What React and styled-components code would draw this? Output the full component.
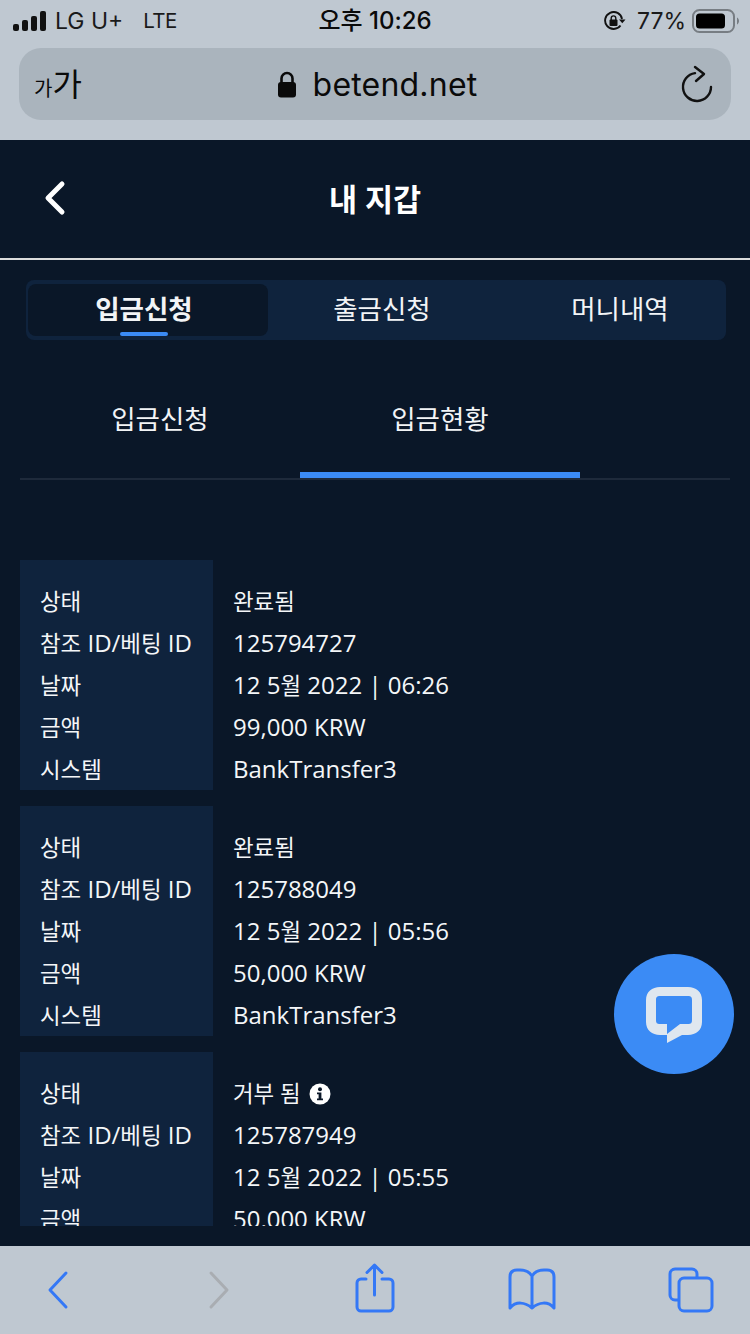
import React from "react";
import styled, { createGlobalStyle } from "styled-components";

const KO = `"Open Sans", "Noto Sans CJK KR", sans-serif`;
const SYS = `Inter, "Noto Sans CJK KR", sans-serif`;

const GlobalStyle = createGlobalStyle`
  html, body { margin: 0; padding: 0; background: #0a1728; }
  * { box-sizing: border-box; }
`;

// ===== browser chrome =====
const Page = styled.div`
  position: relative;
  width: 750px;
  height: 1334px;
  display: flex;
  flex-direction: column;
  overflow: hidden;
  background: #0a1728;
  font-family: ${KO};
  color: #fff;
`;
const TopChrome = styled.div`
  height: 140px;
  flex: none;
  background: #bfc8d1;
  color: #0a0a0a;
  font-family: ${SYS};
  padding: 0 19px;
`;
const StatusBar = styled.div`
  height: 48px;
  display: grid;
  grid-template-columns: 1fr auto 1fr;
  align-items: center;
  padding: 0 0 6px 0;
  font-size: 23px;
  line-height: 30px;
`;
const StatusLeft = styled.div`
  display: flex;
  align-items: center;
  margin-left: -6px;
  gap: 8px;
  color: #1a1a1a;
`;
const StatusTime = styled.div`
  font-size: 24px;
  font-weight: 500;
`;
const StatusRight = styled.div`
  display: flex;
  align-items: center;
  justify-content: flex-end;
  gap: 6px;
  color: #1a1a1a;
  margin-right: -8px;
`;
const Carrier = styled.span`
  font-size: 23px;
`;
const Network = styled.span`
  margin-left: 12px;
  font-size: 20.5px;
  letter-spacing: -0.6px;
`;
const Percent = styled.span`
  margin-left: 5px;
`;
const UrlBar = styled.div`
  height: 72px;
  width: 712px;
  border-radius: 22px;
  background: #aab4bd;
  display: grid;
  grid-template-columns: 1fr auto 1fr;
  align-items: center;
  padding: 0 17px 0 15px;
`;
const FontSizer = styled.div`
  display: flex;
  align-items: baseline;
  font-family: "Noto Sans CJK KR", sans-serif;
  font-size: 32px;
  line-height: 38px;
  padding-top: 2px;
`;
const SmallKa = styled.span`
  font-size: 20px;
`;
const UrlText = styled.div`
  display: flex;
  align-items: center;
  gap: 16px;
  font-size: 32px;
  line-height: 40px;
  letter-spacing: 0.2px;
  margin-left: 6px;
  padding-top: 1px;
`;
const Reload = styled.div`
  display: flex;
  justify-content: flex-end;
`;

// ===== wallet header =====
const Header = styled.header`
  height: 120px;
  flex: none;
  display: flex;
  align-items: center;
  justify-content: center;
  position: relative;
  border-bottom: 2px solid #dcdcdc;
  font-size: 30.5px;
  font-weight: 700;
  padding-bottom: 2px;
`;
const BackButton = styled.div`
  position: absolute;
  left: 40px;
  top: 38px;
  display: flex;
`;

const MainTabs = styled.nav`
  width: 700px;
  height: 60px;
  margin: 20px 0 0 26px;
  flex: none;
  display: grid;
  grid-template-columns: 240px 228px 1fr;
  padding: 4px 2px;
  border-radius: 8px;
  background: #0f233d;
`;
const MainTab = styled.div`
  position: relative;
  display: flex;
  align-items: center;
  justify-content: center;
  font-size: 26.5px;
  line-height: 36px;
  padding: 0 ${(props) => props.$padRight || 0}px 2px ${(props) => props.$padLeft || 0}px;
  font-weight: ${(props) => (props.$active ? 700 : 400)};
  background: ${(props) => (props.$active ? "#0a1728" : "transparent")};
  border-radius: 8px;
  color: #f2f4f6;
`;
const TabMark = styled.span`
  position: absolute;
  left: 92px;
  bottom: 0;
  width: 48px;
  height: 4px;
  border-radius: 2px;
  background: #3b8bf5;
`;

const SubTabs = styled.div`
  margin: 40px 20px 0;
  height: 100px;
  flex: none;
  display: flex;
  border-bottom: 2px solid #1e2a3b;
`;
const SubTab = styled.div`
  width: 280px;
  display: flex;
  align-items: flex-start;
  justify-content: center;
  padding-top: 19px;
  font-size: 26.5px;
  line-height: 40px;
  color: #f2f4f6;
  border-bottom: ${(props) => (props.$active ? "6px solid #3b8bf5" : "0")};
  height: ${(props) => (props.$active ? "98px" : "auto")};
`;

// ===== history list =====
const HistoryList = styled.div`
  margin: 80px 20px 0;
  height: 666px;
  flex: none;
  overflow: hidden;
  display: flex;
  flex-direction: column;
  gap: 16px;
`;
const Record = styled.div`
  flex: none;
  height: 230px;
  display: grid;
  grid-template-columns: 193px 1fr;
`;
const Labels = styled.div`
  background: #0f233d;
  padding: 20px 0 0 20px;
`;
const Values = styled.div`
  padding: 20px 0 0 20px;
`;
const Line = styled.div`
  height: 42px;
  font-size: 24px;
  line-height: 42px;
  white-space: nowrap;
  color: #f4f6f8;
`;
const Hangul = styled.span`
  font-size: 22.4px;
`;
const InfoMark = styled.svg`
  width: 22px;
  height: 22px;
  margin-left: 8px;
  vertical-align: -3px;
`;

// ===== floating chat =====
const ChatBubble = styled.div`
  position: absolute;
  left: 614px;
  top: 954px;
  width: 120px;
  height: 120px;
  border-radius: 50%;
  background: #3b8bf5;
  display: flex;
  align-items: center;
  justify-content: center;
  padding-top: 2px;
`;

// ===== safari toolbar =====
const Spacer = styled.div`
  flex: 1;
`;
const BottomBar = styled.div`
  height: 88px;
  flex: none;
  background: #bfc8d1;
  display: grid;
  grid-template-columns: repeat(5, 1fr);
  align-items: center;
  padding: 0 8px 0 8px;
`;
const ToolCell = styled.div`
  display: flex;
  justify-content: center;
  transform: translate(${(props) => props.$shift || 0}px, ${(props) => props.$lift || 0}px);
`;

const records = [
  { status: "완료됨", ref: "125794727", time: "06:26", amount: "99,000 KRW" },
  { status: "완료됨", ref: "125788049", time: "05:56", amount: "50,000 KRW" },
  { status: "거부 됨", ref: "125787949", time: "05:55", amount: "50,000 KRW", info: true },
];

const InfoIcon = () => (
  <InfoMark viewBox="0 0 22 22">
    <circle cx="11" cy="11" r="10.5" fill="#fff" />
    <circle cx="11" cy="6.2" r="2" fill="#0a1728" />
    <path d="M8 9.5h4.4v6H14v1.8H8v-1.8h1.6v-4.2H8z" fill="#0a1728" />
  </InfoMark>
);

const App = () => {
  const blue = "#3478f6";
  return (
    <Page>
      <GlobalStyle />
      <TopChrome>
        <StatusBar>
          <StatusLeft>
            <svg width="34" height="20" viewBox="0 0 34 20">
              <rect x="0" y="13" width="6" height="7" rx="2" fill="#111" />
              <rect x="9" y="9" width="6" height="11" rx="2" fill="#111" />
              <rect x="18" y="5" width="6" height="15" rx="2" fill="#111" />
              <rect x="27" y="0" width="6" height="20" rx="2" fill="#111" />
            </svg>
            <Carrier>LG U+</Carrier>
            <Network>LTE</Network>
          </StatusLeft>
          <StatusTime>오후 10:26</StatusTime>
          <StatusRight>
            <svg width="22" height="20" viewBox="0 0 22 20" fill="none">
              <path d="M16.5 14.5A8.5 8.5 0 1 1 18 8" stroke="#111" strokeWidth="1.9" />
              <path d="M15 8.5h6.5l-3.2 3.8z" fill="#111" />
              <rect x="5.500" y="8.5" width="8" height="6.5" rx="1" fill="#111" />
              <path d="M7.2 9V7.2a2.3 2.3 0 0 1 4.6 0V9" stroke="#111" strokeWidth="1.4" />
            </svg>
            <Percent>77%</Percent>
            <svg width="47" height="24" viewBox="0 0 47 24" fill="none">
              <rect x="1" y="1" width="41" height="22" rx="6.5" stroke="#777d83" strokeWidth="2" />
              <rect x="4" y="4.5" width="29" height="15" rx="3.5" fill="#000" />
              <path d="M45 8.5c1.2.6 2 2 2 3.5s-.8 2.9-2 3.5z" fill="#777d83" />
            </svg>
          </StatusRight>
        </StatusBar>
        <UrlBar>
          <FontSizer>
            <SmallKa>가</SmallKa>가
          </FontSizer>
          <UrlText>
            <svg width="20" height="27" viewBox="0 0 20 27" fill="none">
              <path d="M4.5 12V7.5a5.5 5.5 0 0 1 11 0V12" stroke="#0a0a0a" strokeWidth="2.6" />
              <rect x="1" y="11" width="18" height="15.5" rx="3" fill="#0a0a0a" />
            </svg>
            betend.net
          </UrlText>
          <Reload>
            <svg width="34" height="40" viewBox="0 0 34 40" fill="none" stroke="#111" strokeWidth="2.4" strokeLinecap="round" strokeLinejoin="round">
              <path d="M15 9.1A14 14 0 1 0 31 23" />
              <path d="M15 3l9 7-8 7" />
            </svg>
          </Reload>
        </UrlBar>
      </TopChrome>

      <Header>
        <BackButton>
          <svg width="30" height="40" viewBox="0 0 30 40" fill="none" stroke="#fff" strokeWidth="5" strokeLinecap="round" strokeLinejoin="round">
            <path d="M22 6L8 20l14 14" />
          </svg>
        </BackButton>
        내 지갑
      </Header>

      <MainTabs>
        <MainTab $active $padRight={8}>
          입금신청
          <TabMark />
        </MainTab>
        <MainTab>출금신청</MainTab>
        <MainTab $padLeft={20}>머니내역</MainTab>
      </MainTabs>

      <SubTabs>
        <SubTab>입금신청</SubTab>
        <SubTab $active>입금현황</SubTab>
      </SubTabs>

      <HistoryList>
        {records.map((r) => (
          <Record key={r.ref}>
            <Labels>
              <Line><Hangul>상태</Hangul></Line>
              <Line><Hangul>참조</Hangul> ID/<Hangul>베팅</Hangul> ID</Line>
              <Line><Hangul>날짜</Hangul></Line>
              <Line><Hangul>금액</Hangul></Line>
              <Line><Hangul>시스템</Hangul></Line>
            </Labels>
            <Values>
              <Line>
                <Hangul>{r.status}</Hangul>
                {r.info && <InfoIcon />}
              </Line>
              <Line>{r.ref}</Line>
              <Line>12 5<Hangul>월</Hangul> 2022 | {r.time}</Line>
              <Line>{r.amount}</Line>
              <Line>BankTransfer3</Line>
            </Values>
          </Record>
        ))}
      </HistoryList>

      <Spacer />

      <BottomBar>
        <ToolCell $shift={-22}>
          <svg width="28" height="40" viewBox="0 0 28 40" fill="none" stroke={blue} strokeWidth="3" strokeLinecap="round" strokeLinejoin="round">
            <path d="M21 3L5 20l16 17" />
          </svg>
        </ToolCell>
        <ToolCell $shift={-10}>
          <svg width="28" height="40" viewBox="0 0 28 40" fill="none" stroke="#a9adb2" strokeWidth="3" strokeLinecap="round" strokeLinejoin="round">
            <path d="M7 3l16 17L7 37" />
          </svg>
        </ToolCell>
        <ToolCell $lift={-2}>
          <svg width="40" height="50" viewBox="0 0 40 50" fill="none" stroke={blue} strokeWidth="3" strokeLinecap="round" strokeLinejoin="round">
            <path d="M11 16H6a4 4 0 0 0-4 4v24a4 4 0 0 0 4 4h28a4 4 0 0 0 4-4V20a4 4 0 0 0-4-4h-7" />
            <path d="M19.5 32V2M12 9.5L19.5 2 27 9.500" />
          </svg>
        </ToolCell>
        <ToolCell $shift={10}>
          <svg width="48" height="44" viewBox="0 0 48 44" fill="none" stroke={blue} strokeWidth="3" strokeLinecap="round" strokeLinejoin="round">
            <path d="M24 8C21 3 17 2 12 2H9C4.500 2 2 4.500 2 9V40C8 33 17 34 24 40C31 34 40 33 46 40V9C46 4.500 43.500 2 39 2H36C31 2 27 3 24 8ZM24 8V40" />
          </svg>
        </ToolCell>
        <ToolCell $shift={22}>
          <svg width="46" height="46" viewBox="0 0 46 46" fill="none" stroke={blue} strokeWidth="3" strokeLinejoin="round">
            <path d="M10 33H7a5 5 0 0 1-5-5V7a5 5 0 0 1 5-5h17a5 5 0 0 1 5 5v3" />
            <rect x="11" y="11" width="33" height="33" rx="5" />
          </svg>
        </ToolCell>
      </BottomBar>

      <ChatBubble>
        <svg width="56" height="56" viewBox="0 0 56 56">
          <path
            fillRule="evenodd"
            d="M14 0H42C50 0 56 5 56 13V35C56 43 50 48 42 48H36L21 56V48H14C6 48 0 43 0 35V13C0 5 6 0 14 0ZM14 9C11 9 10 10 10 13V33C10 36 11 37 14 37H21V47L34 37H42C45 37 46 36 46 33V13C46 10 45 9 42 9Z"
            fill="#dfe7ef"
          />
        </svg>
      </ChatBubble>
    </Page>
  );
};

export default App;
